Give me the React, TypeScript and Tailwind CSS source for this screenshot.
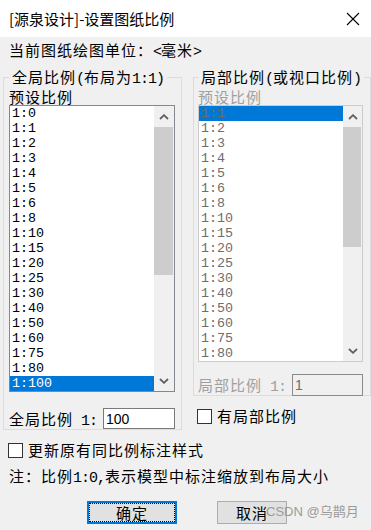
import type { ReactNode } from "react";

const LEFT_SCALES = [
  "1:0", "1:1", "1:2", "1:3", "1:4", "1:5", "1:6", "1:8", "1:10", "1:15",
  "1:20", "1:25", "1:30", "1:40", "1:50", "1:60", "1:75", "1:80", "1:100",
];

const RIGHT_SCALES = [
  "1:1", "1:2", "1:3", "1:4", "1:5", "1:6", "1:8", "1:10", "1:15",
  "1:20", "1:25", "1:30", "1:40", "1:50", "1:60", "1:75", "1:80",
];

// half-width (ascii) chunk, SimSun-ish 8px advance; leading 0 so it doesn't grow the line box
function A({ children }: { children: ReactNode }) {
  return (
    <span className="font-['Liberation_Mono',monospace] text-[15px] leading-[0] tracking-[-1px]">
      {children}
    </span>
  );
}

function Chevron({ up }: { up?: boolean }) {
  return (
    <svg width="10" height="6" viewBox="0 0 10 6">
      <polyline
        points={up ? "1,5 5,1.2 9,5" : "1,1 5,4.8 9,1"}
        fill="none"
        stroke="#606060"
        strokeWidth="1.8"
      />
    </svg>
  );
}

function Checkbox({ label }: { label: string }) {
  return (
    <div className="flex h-[16px] items-center">
      <div className="h-[15px] w-[15px] border border-[#333333] bg-white" />
      <span className="ml-[5px]">{label}</span>
    </div>
  );
}

function ListBox({
  items,
  selected,
  disabled,
  outerClass,
  thumbClass,
}: {
  items: string[];
  selected: string;
  disabled?: boolean;
  outerClass: string;
  thumbClass: string;
}) {
  return (
    <div className={`flex border bg-white ${outerClass}`}>
      <div className="w-[144px] overflow-hidden">
        {items.map((s) => {
          const on = s === selected;
          let cls = "text-black";
          if (on) cls = disabled ? "bg-[#0078d7] text-[#7d6a55]" : "bg-[#0078d7] text-white";
          else if (disabled) cls = "text-[#6d6d6d]";
          return (
            <div
              key={s}
              className={`h-[15px] pl-[2px] font-['Liberation_Mono',monospace] text-[13.33px] leading-[15px] tracking-normal ${cls}`}
            >
              {s}
            </div>
          );
        })}
      </div>
      <div className="flex flex-1 flex-col bg-[#f0f0f0]">
        <div className="flex h-[21px] items-center justify-center">
          <Chevron up />
        </div>
        <div className="flex-1">
          <div className={`mr-px bg-[#cdcdcd] ${thumbClass}`} />
        </div>
        <div className="flex h-[21px] items-center justify-center">
          <Chevron />
        </div>
      </div>
    </div>
  );
}

export default function App() {
  return (
    <div className="relative h-[530px] w-[371px] overflow-hidden bg-[#f0f0f0] font-['Noto_Sans_CJK_SC',sans-serif] text-[15px] leading-[16px] tracking-[1px] text-black">
      {/* title bar */}
      <div className="flex h-[37px] items-center justify-between bg-white pl-[9px] pr-[11px] tracking-normal">
        <span className="text-[15px]">[源泉设计]-设置图纸比例</span>
        <svg width="14" height="14" viewBox="0 0 14 14">
          <path d="M1 1 L13 13 M13 1 L1 13" stroke="#000" strokeWidth="1.1" />
        </svg>
      </div>

      <div className="mt-[5px] pl-[9px]">
        当前图纸绘图单位：<A>{"<"}</A>毫米<A>{">"}</A>
      </div>

      <div className="mt-[11px] flex pl-[3px]">
        {/* global scale */}
        <fieldset className="h-[361px] w-[179px] border border-[#dcdcdc] pl-[5px] pt-[4px]">
          <legend className="px-[3px] leading-[16px]">
            全局比例<A>(</A>布局为<A>1:1)</A>
          </legend>
          <div>预设比例</div>
          <ListBox
            items={LEFT_SCALES}
            selected="1:100"
            outerClass="h-[287px] w-[166px] border-[#828790]"
            thumbClass="h-[148px]"
          />
          <div className="mt-[16px] flex h-[21px] items-center">
            <span className="w-[94px]">
              全局比例<A> 1:</A>
            </span>
            <div className="flex h-[21px] w-[72px] items-center border border-[#7a7a7a] bg-white pl-[2px] font-['Liberation_Sans',sans-serif] text-[14px] tracking-normal">
              100
            </div>
          </div>
        </fieldset>

        {/* local scale */}
        <div className="ml-[11px] flex flex-col">
          <fieldset className="h-[327px] w-[178px] border border-[#dcdcdc] pl-[4px] pt-[4px]">
            <legend className="px-[3px] leading-[16px]">
              局部比例<A>(</A>或视口比例<A>)</A>
            </legend>
            <div className="text-[#a0a0a0]">预设比例</div>
            <ListBox
              items={RIGHT_SCALES}
              selected="1:1"
              disabled
              outerClass="h-[257px] w-[165px] border-[#cccccc]"
              thumbClass="h-[120px]"
            />
            <div className="mt-[12px] flex h-[21px] items-center">
              <span className="w-[94px] text-[#a0a0a0]">
                局部比例<A> 1:</A>
              </span>
              <div className="flex h-[22px] w-[71px] items-center border border-[#8a8a8a] pl-[2px] font-['Liberation_Sans',sans-serif] text-[14px] tracking-normal text-[#6d6d6d]">
                1
              </div>
            </div>
          </fieldset>
          <div className="ml-[4px] mt-[12px]">
            <Checkbox label="有局部比例" />
          </div>
        </div>
      </div>

      <div className="ml-[8px] mt-[12px]">
        <Checkbox label="更新原有同比例标注样式" />
      </div>

      <div className="ml-[9px] mt-[10px]">
        注：比例<A>1:0,</A>表示模型中标注缩放到布局大小
      </div>

      <div className="mt-[17px] flex">
        <button className="ml-[87px] flex h-[23px] w-[90px] items-center justify-center border-2 border-[#0078d7] bg-[#e1e1e1] p-0">
          <span className="flex h-full w-full items-center justify-center border border-dotted border-black">
            确定
          </span>
        </button>
        <button className="ml-[40px] flex h-[23px] w-[70px] items-center justify-center border border-[#adadad] bg-[#e1e1e1]">
          取消
        </button>
      </div>

      {/* watermark */}
      <div className="absolute left-[266px] top-[504px] font-['Liberation_Sans','Noto_Sans_CJK_SC',sans-serif] text-[13px] leading-[16px] tracking-normal text-[#9a9a9a]">
        CSDN @乌鹊月
      </div>
    </div>
  );
}
